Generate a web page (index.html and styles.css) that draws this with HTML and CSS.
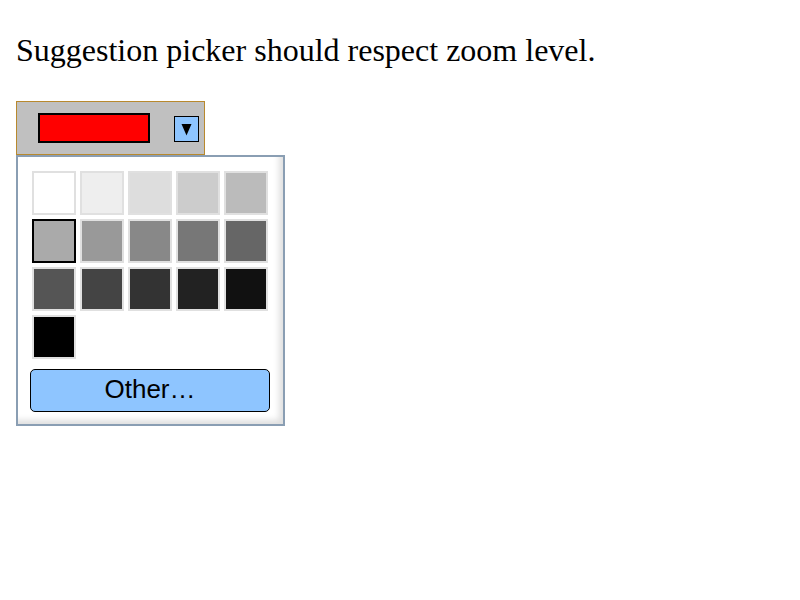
FILE: index.html
```html
<!DOCTYPE html>
<html>
<head>
<meta charset="utf-8">
<link rel="stylesheet" href="styles.css">
</head>
<body>
<p class="title">Suggestion picker should respect zoom level.</p>
<div class="picker">
  <div class="select">
    <span class="value"></span>
    <span class="arrow"><svg width="11" height="13" viewBox="0 0 11 13"><path d="M0.5 1 L10.5 1 L5.5 12.5 Z" fill="#000"/></svg></span>
  </div>
  <div class="popup">
    <div class="swatches">
      <span class="sw" style="background:#fff"></span>
      <span class="sw" style="background:#eee"></span>
      <span class="sw" style="background:#ddd"></span>
      <span class="sw" style="background:#ccc"></span>
      <span class="sw" style="background:#bbb"></span>
      <span class="sw sel" style="background:#aaa"></span>
      <span class="sw" style="background:#999"></span>
      <span class="sw" style="background:#888"></span>
      <span class="sw" style="background:#777"></span>
      <span class="sw" style="background:#666"></span>
      <span class="sw" style="background:#555"></span>
      <span class="sw" style="background:#444"></span>
      <span class="sw" style="background:#333"></span>
      <span class="sw" style="background:#222"></span>
      <span class="sw" style="background:#111"></span>
      <span class="sw" style="background:#000"></span>
    </div>
    <div class="other">Other…</div>
  </div>
</div>
</body>
</html>
```
FILE: styles.css
```css
html {
  margin: 0;
  padding: 0;
}
body {
  margin: 0;
  padding: 16px;
  font-family: "Liberation Serif", serif;
}
.title {
  font-size: 32px;
  margin: 16px 0 32px 0;
  color: #000;
}
.picker {
  width: 269px;
}
.select {
  box-sizing: border-box;
  width: 189px;
  height: 54px;
  border: 1px solid #b8892e;
  background: #c0c0c0;
  display: flex;
  align-items: center;
  padding-left: 21px;
}
.value {
  box-sizing: border-box;
  width: 112px;
  height: 30px;
  border: 2px solid #000;
  background: #ff0000;
  margin-top: -1px;
}
.arrow {
  box-sizing: border-box;
  width: 25px;
  height: 26px;
  margin-left: 24px;
  border: 1px solid #000;
  background: #8ec5ff;
  display: flex;
  align-items: center;
  justify-content: center;
  margin-top: 2px;
}
.arrow svg {
  display: block;
}
.popup {
  box-sizing: border-box;
  width: 269px;
  height: 271px;
  border: 2px solid #8a9eb3;
  background: #fff;
  padding: 14px 13px 12px 12px;
  box-shadow: inset -6px -6px 6px -2px rgba(0, 0, 0, 0.13);
}
.swatches {
  display: grid;
  grid-template-columns: repeat(5, 44px);
  grid-auto-rows: 44px;
  gap: 4px;
  margin-left: 2px;
}
.sw {
  box-sizing: border-box;
  border: 2px solid #e0e0e0;
}
.sw.sel {
  border-color: #000;
}
.other {
  box-sizing: border-box;
  margin-top: 10px;
  width: 240px;
  height: 43px;
  border: 1px solid #000;
  border-radius: 5px;
  background: #8ec5ff;
  font-family: "Liberation Sans", Arial, sans-serif;
  font-size: 26px;
  line-height: 39px;
  text-align: center;
  color: #000;
}
```
